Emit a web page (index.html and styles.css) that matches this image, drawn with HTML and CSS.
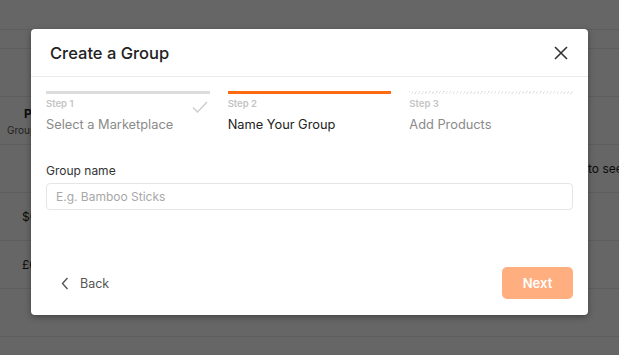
FILE: index.html
```html
<!DOCTYPE html>
<html lang="en">
<head>
  <meta charset="UTF-8" />
  <title>Create a Group</title>
  <link rel="stylesheet" href="styles.css">
</head>
<body>
  <div class="page">
    <div class="row row-top"></div>
    <div class="row row-bar"></div>
    <div class="row"></div>
    <div class="row row-head">
      <div class="cell">
        <strong>Price</strong>
        <span class="sub">Group</span>
      </div>
    </div>
    <div class="row">
      <div class="cell"></div>
      <div class="cell note">to see</div>
    </div>
    <div class="row"><div class="cell">$0.00</div></div>
    <div class="row"><div class="cell">£6.50</div></div>
    <div class="row"></div>
  </div>

  <div class="overlay">
    <div class="modal">
      <div class="modal-header">
        <h2>Create a Group</h2>
        <button class="close" aria-label="Close">
          <svg width="14" height="14" viewBox="0 0 14 14"><path d="M1 1L13 13M13 1L1 13" stroke="#333" stroke-width="1.6" fill="none"/></svg>
        </button>
      </div>

      <div class="modal-body">
        <div class="steps">
          <div class="step done">
            <div class="bar"></div>
            <div class="step-top">
              <span class="step-num">Step 1</span>
              <svg class="check" width="16" height="12" viewBox="0 0 16 12"><path d="M1 6.5L5.5 11L15 1" stroke="#cfcfcf" stroke-width="1.5" fill="none"/></svg>
            </div>
            <div class="step-title">Select a Marketplace</div>
          </div>
          <div class="step active">
            <div class="bar"></div>
            <div class="step-top"><span class="step-num">Step 2</span></div>
            <div class="step-title">Name Your Group</div>
          </div>
          <div class="step">
            <div class="bar"></div>
            <div class="step-top"><span class="step-num">Step 3</span></div>
            <div class="step-title">Add Products</div>
          </div>
        </div>

        <div class="form-group">
          <label for="group-name">Group name</label>
          <input type="text" id="group-name" placeholder="E.g. Bamboo Sticks" />
        </div>
      </div>

      <div class="modal-footer">
        <button class="back-btn">
          <svg width="8" height="13" viewBox="0 0 8 13"><path d="M6.5 1L1.5 6.5L6.5 12" stroke="#555" stroke-width="1.4" fill="none"/></svg>
          Back
        </button>
        <button class="next-btn" disabled>Next</button>
      </div>
    </div>
  </div>
</body>
</html>
```

FILE: styles.css
```css
* {
  margin: 0;
  padding: 0;
  box-sizing: border-box;
  font-family: Inter, 'Noto Sans', sans-serif;
}

body {
  width: 619px;
  height: 355px;
  overflow: hidden;
  background: #fff;
  color: #222;
}

/* page behind the dialog */
.page {
  display: flex;
  flex-direction: column;
}

.row {
  display: flex;
  align-items: center;
  height: 48px;
  border-bottom: 1px solid #ececec;
  font-size: 12px;
}

.row-top {
  height: 30px;
}

.row-bar {
  height: 19px;
}

.cell {
  width: 66px;
  flex-shrink: 0;
  padding-left: 22px;
  text-align: left;
}

.row-head .cell {
  display: flex;
  flex-direction: column;
  gap: 3px;
  padding-left: 7px;
}

.row-head strong {
  padding-left: 17px;
}

.sub {
  font-size: 10px;
  color: #555;
}

.cell.note {
  width: auto;
  padding-left: 522px;
  white-space: nowrap;
}

/* dialog */
.overlay {
  position: absolute;
  inset: 0;
  background: rgba(0, 0, 0, 0.6);
}

.modal {
  position: absolute;
  left: 31px;
  top: 29px;
  width: 557px;
  height: 286px;
  background: #fff;
  border-radius: 4px;
  box-shadow: 0 2px 6px rgba(0, 0, 0, 0.35);
  display: flex;
  flex-direction: column;
}

.modal-header {
  height: 48px;
  display: flex;
  align-items: center;
  justify-content: space-between;
  padding: 0 18px 0 19px;
  border-bottom: 1px solid #ebebeb;
}

.modal-header h2 {
  font-size: 16.5px;
  font-weight: 500;
  color: #222;
}

.close {
  background: none;
  border: none;
  display: flex;
  padding: 2px;
}

.modal-body {
  flex: 1;
  padding: 14px 15px 0;
}

.steps {
  display: grid;
  grid-template-columns: repeat(3, 1fr);
  gap: 18px;
}

.bar {
  height: 3px;
  background: #dcdcdc;
}

.step.active .bar {
  background: #ff6b12;
}

.step:last-child .bar {
  height: 3px;
  background: repeating-linear-gradient(120deg, #e6e6e6 0 1px, #fff 1px 3px);
}

.step-top {
  display: flex;
  justify-content: space-between;
  align-items: center;
  margin-top: 4px;
  padding-right: 2px;
  height: 12px;
}

.step-num {
  font-size: 9.5px;
  line-height: 12px;
  font-weight: 600;
  color: #c4c4c4;
}

.check {
  margin-top: 6px;
}

.step-title {
  margin-top: 7px;
  font-size: 12.8px;
  line-height: 16px;
  color: #8a8a8a;
}

.step.active .step-title {
  color: #222;
}

.form-group {
  margin-top: 30px;
}

label {
  display: block;
  font-size: 12px;
  line-height: 15px;
  color: #333;
  margin-bottom: 5px;
}

input {
  width: 100%;
  height: 27px;
  padding: 0 9px;
  border: 1px solid #e6e6e6;
  border-radius: 4px;
  font-size: 12px;
  color: #333;
}

input::placeholder {
  color: #a8a8a8;
}

.modal-footer {
  display: flex;
  align-items: center;
  justify-content: space-between;
  padding: 0 15px 16px;
}

.back-btn {
  display: flex;
  align-items: center;
  gap: 11px;
  background: none;
  border: none;
  font-size: 12.5px;
  color: #555;
  padding-left: 15px;
}

.next-btn {
  width: 71px;
  height: 32px;
  background: #ffae80;
  color: #fff;
  font-size: 13px;
  font-weight: 600;
  border: none;
  border-radius: 5px;
}
```
